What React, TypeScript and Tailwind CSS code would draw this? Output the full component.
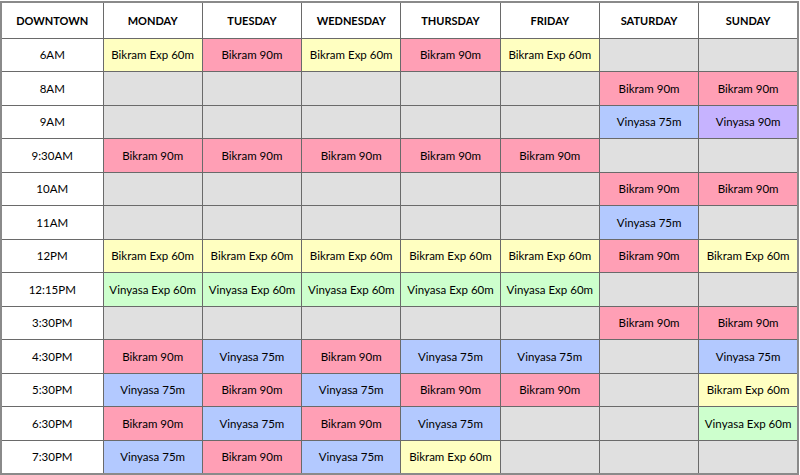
import React from 'react';

type Kind = 'Y' | 'P' | 'B' | 'V' | 'G' | '-';

const colors: Record<Kind, string> = {
  Y: 'bg-[#ffffc1]',
  P: 'bg-[#ff9fb5]',
  B: 'bg-[#b3c9ff]',
  V: 'bg-[#c6b3ff]',
  G: 'bg-[#cdffcd]',
  '-': 'bg-[#e0e0e0]',
};

const labels: Record<Kind, string> = {
  Y: 'Bikram Exp 60m',
  P: 'Bikram 90m',
  B: 'Vinyasa 75m',
  V: 'Vinyasa 90m',
  G: 'Vinyasa Exp 60m',
  '-': '',
};

const days = ['MONDAY', 'TUESDAY', 'WEDNESDAY', 'THURSDAY', 'FRIDAY', 'SATURDAY', 'SUNDAY'];

const rows: [string, Kind[]][] = [
  ['6AM', ['Y', 'P', 'Y', 'P', 'Y', '-', '-']],
  ['8AM', ['-', '-', '-', '-', '-', 'P', 'P']],
  ['9AM', ['-', '-', '-', '-', '-', 'B', 'V']],
  ['9:30AM', ['P', 'P', 'P', 'P', 'P', '-', '-']],
  ['10AM', ['-', '-', '-', '-', '-', 'P', 'P']],
  ['11AM', ['-', '-', '-', '-', '-', 'B', '-']],
  ['12PM', ['Y', 'Y', 'Y', 'Y', 'Y', 'P', 'Y']],
  ['12:15PM', ['G', 'G', 'G', 'G', 'G', '-', '-']],
  ['3:30PM', ['-', '-', '-', '-', '-', 'P', 'P']],
  ['4:30PM', ['P', 'B', 'P', 'B', 'B', '-', 'B']],
  ['5:30PM', ['B', 'P', 'B', 'P', 'P', '-', 'Y']],
  ['6:30PM', ['P', 'B', 'P', 'B', '-', '-', 'G']],
  ['7:30PM', ['B', 'P', 'B', 'Y', '-', '-', '-']],
];

const cell = 'border border-[#6a6a6a] p-0 text-center align-middle whitespace-nowrap overflow-hidden';

export default function App() {
  return (
    <div className="w-[800px] h-[475px] bg-white pt-px" style={{ fontFamily: 'Lato, "Open Sans", sans-serif' }}>
      <table className="w-[799px] table-fixed border-collapse border-2 border-[#8a8a8a] text-[11.5px] leading-none text-black">
        <colgroup>
          <col className="w-[102px]" />
          {days.map((d) => (
            <col key={d} />
          ))}
        </colgroup>
        <thead>
          <tr className="h-[36px]">
            <th className={`${cell} bg-white text-[11px] font-bold`}>DOWNTOWN</th>
            {days.map((d) => (
              <th key={d} className={`${cell} bg-white text-[11px] font-bold`}>
                {d}
              </th>
            ))}
          </tr>
        </thead>
        <tbody>
          {rows.map(([time, cells]) => (
            <tr key={time} className="h-[33.5px]">
              <td className={`${cell} bg-white`}>{time}</td>
              {cells.map((k, i) => (
                <td key={i} className={`${cell} ${colors[k]}`}>
                  {labels[k]}
                </td>
              ))}
            </tr>
          ))}
        </tbody>
      </table>
    </div>
  );
}
